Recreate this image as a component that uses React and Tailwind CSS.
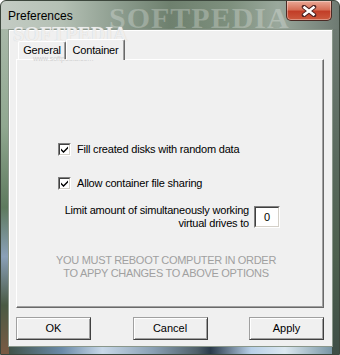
import React from "react";

function CheckBox() {
  return (
    <div className="w-[13px] h-[13px] box-border border border-t-[#808080] border-l-[#808080] border-b-white border-r-white shrink-0">
      <div className="w-full h-full box-border border border-t-[#404040] border-l-[#404040] border-b-[#d4d0c8] border-r-[#d4d0c8] bg-white flex items-center justify-center">
        <svg width="9" height="9" viewBox="0 0 9 9">
          <path d="M1 3.5 L3.5 6 L8 1.5 L8 3.5 L3.5 8 L1 5.5 Z" fill="#000" />
        </svg>
      </div>
    </div>
  );
}

function Btn({ children }) {
  return (
    <div className="w-[75px] h-[23px] box-border border border-t-[#a0a0a0] border-l-[#a0a0a0] border-b-[#404040] border-r-[#404040] bg-[#f0f0f0] shadow-[inset_1px_1px_0_#ffffff,inset_-1px_-1px_0_#a0a0a0] flex items-center justify-center text-[11px] text-black">
      {children}
    </div>
  );
}

export default function App() {
  return (
    <div
      className="relative w-[340px] h-[355px] overflow-hidden flex flex-col box-border rounded-t-[6px] border border-[#3c463c]"
      style={{
        fontFamily: '"Liberation Sans", Arial, sans-serif',
        background:
          "linear-gradient(90deg, #c4ccc4 0%, #b4c0b4 18%, #8e9e90 34%, #6e806e 50%, #7e907e 68%, #9aa89c 82%, #6e7a72 100%)",
      }}
    >
      {/* bottom frame highlights */}
      <div
        className="absolute left-0 right-0 bottom-0 h-[9px] pointer-events-none"
        style={{
          background:
            "linear-gradient(90deg, #3a4a3a 0%, #6a8aa8 18%, #c8d8e8 30%, #8aa0b4 45%, #50606a 58%, #2a3a4a 62%, #b8d0e8 74%, #dce8f0 84%, #6a8a9a 100%)",
        }}
      />
      {/* left frame */}
      <div
        className="absolute left-0 top-[28px] bottom-0 w-[8px] pointer-events-none"
        style={{
          background:
            "linear-gradient(180deg, #a8b8a8 0%, #90a890 30%, #5e7a5e 55%, #8aa0b8 70%, #4a5a44 85%, #7a5a44 100%)",
        }}
      />
      {/* right frame */}
      <div
        className="absolute right-0 top-[28px] bottom-0 w-[7px] pointer-events-none"
        style={{
          background:
            "linear-gradient(180deg, #6e7a72 0%, #5a6a5e 40%, #4e604e 70%, #3e4e46 100%)",
        }}
      />
      {/* watermark on title bar */}
      <div
        className="absolute left-[108px] top-[2px] text-[30px] font-bold tracking-[1px] text-white/25 pointer-events-none leading-none"
        style={{ fontFamily: '"Liberation Serif", serif' }}
      >
        SOFTPEDIA
      </div>

      {/* title bar */}
      <div className="relative h-[28px] flex items-start justify-between shrink-0">
        <div className="pl-[7px] pt-[8px] text-[12px] leading-[14px] text-black">Preferences</div>
        <div className="mr-[7px] w-[46px] h-[20px] box-border rounded-b-[5px] border border-t-0 border-[#4a2a24] bg-[linear-gradient(180deg,#eaa896_0%,#d67058_45%,#c23e28_55%,#cc5a3e_100%)] shadow-[inset_0_0_0_1px_rgba(255,255,255,0.35)] flex items-center justify-center">
          <svg width="16" height="12" viewBox="0 0 16 12">
            <path d="M3 2 L13 10 M13 2 L3 10" stroke="#4a2020" strokeWidth="4.5" strokeLinecap="round" />
            <path d="M3.5 2.5 L12.5 9.5 M12.5 2.5 L3.5 9.5" stroke="#ffffff" strokeWidth="2.6" strokeLinecap="square" />
          </svg>
        </div>
      </div>

      {/* client area */}
      <div className="relative ml-[7px] mr-[6px] mb-[7px] flex-1 box-border border border-[#8a968a] bg-[#f0f0f0] shadow-[inset_1px_1px_0_#ffffff] flex flex-col px-[7px]">
        {/* faint watermark */}
        <div
          className="absolute left-[4px] top-[-6px] text-[20px] font-bold text-white/70 pointer-events-none leading-none"
          style={{ fontFamily: '"Liberation Serif", serif', textShadow: "0 0 1px #c8c8c8" }}
        >
          SOFTPEDIA
        </div>
        <div className="absolute left-[24px] top-[25px] text-[7px] text-[#d0d0d0] pointer-events-none leading-none">
          www.softpedia.com
        </div>

        {/* tabs */}
        <div className="relative flex items-end h-[29px] pl-[2px] mt-0">
          <div className="w-[48px] h-[18px] box-border border border-b-0 border-t-white border-l-white border-r-[#696969] rounded-t-[2px] flex items-center justify-center text-[11px] tracking-[-0.2px] text-black mb-0 shadow-[inset_-1px_0_0_#a0a0a0]">
            General
          </div>
          <div className="relative z-10 w-[59px] h-[21px] -mb-[1px] box-border border border-b-0 border-t-white border-l-white border-r-[#696969] rounded-t-[2px] bg-[#f0f0f0] flex items-start justify-center pt-[2px] text-[11px] tracking-[-0.2px] text-black shadow-[inset_-1px_0_0_#a0a0a0]">
            Container
          </div>
        </div>

        {/* panel */}
        <div className="w-[308px] h-[249px] box-border border border-t-white border-l-white border-b-[#696969] border-r-[#696969] shadow-[inset_-1px_-1px_0_#a0a0a0] flex flex-col text-[11px] tracking-[-0.2px] text-black">
          <div className="mt-[83px] flex items-center h-[13px] pl-[41px] gap-[6px]">
            <CheckBox />
            <span className="leading-[13px]">Fill created disks with random data</span>
          </div>
          <div className="mt-[21px] flex items-center h-[13px] pl-[41px] gap-[6px]">
            <CheckBox />
            <span className="leading-[13px]">Allow container file sharing</span>
          </div>
          <div className="mt-[14px] flex items-start justify-end pr-[43px] gap-[5px]">
            <div className="text-right leading-[13px]">
              <div>Limit amount of simultaneously working</div>
              <div>virtual drives to</div>
            </div>
            <div className="mt-[2px] w-[26px] h-[22px] box-border border border-t-[#808080] border-l-[#808080] border-b-white border-r-white">
              <div className="w-full h-full box-border border border-t-[#404040] border-l-[#404040] border-b-[#d4d0c8] border-r-[#d4d0c8] bg-white flex items-center justify-center text-[11px]">
                0
              </div>
            </div>
          </div>
          <div className="mt-[24px] pr-[8px] text-center leading-[13px] tracking-[-0.3px] text-[#a0a0a0]">
            <div>YOU MUST REBOOT COMPUTER IN ORDER</div>
            <div>TO APPY CHANGES TO ABOVE OPTIONS</div>
          </div>
        </div>

        {/* buttons */}
        <div className="mt-[9px] w-[308px] flex justify-between">
          <Btn>OK</Btn>
          <Btn>Cancel</Btn>
          <Btn>Apply</Btn>
        </div>
      </div>
    </div>
  );
}
